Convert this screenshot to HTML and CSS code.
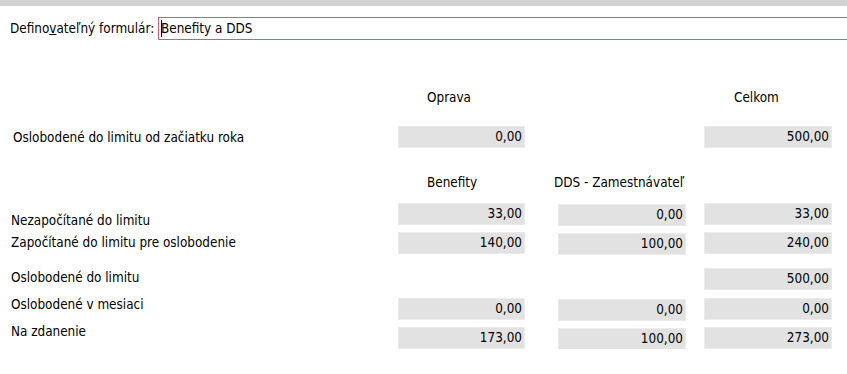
FILE: index.html
```html
<!DOCTYPE html>
<html lang="sk">
<head>
    <meta charset="UTF-8">
    <title>Definovateľný formulár</title>
    <link rel="stylesheet" href="styles.css">
</head>
<body>

    <div class="topbar"></div>

    <div class="form-row">
        <label class="form-label">Defino<u>v</u>ateľný formulár:</label>
        <div class="form-input"><span class="caret"></span>Benefity a DDS</div>
    </div>

    <!-- Oprava / Celkom -->
    <div class="row head head-a">
        <div class="label"></div>
        <div class="c1 title">Oprava</div>
        <div class="c2"></div>
        <div class="c3 title">Celkom</div>
    </div>

    <div class="row row-start">
        <div class="label label-wide">Oslobodené do limitu od začiatku roka</div>
        <div class="c1 field">0,00</div>
        <div class="c2"></div>
        <div class="c3 field">500,00</div>
    </div>

    <!-- Benefity / DDS -->
    <div class="row head head-b">
        <div class="label"></div>
        <div class="c1 title">Benefity</div>
        <div class="c2 title title-dds">DDS - Zamestnávateľ</div>
        <div class="c3"></div>
    </div>

    <div class="row row-b1">
        <div class="label">Nezapočítané do limitu</div>
        <div class="c1 field">33,00</div>
        <div class="c2 field">0,00</div>
        <div class="c3 field">33,00</div>
    </div>

    <div class="row row-b2">
        <div class="label">Započítané do limitu pre oslobodenie</div>
        <div class="c1 field">140,00</div>
        <div class="c2 field">100,00</div>
        <div class="c3 field">240,00</div>
    </div>

    <div class="row row-b3">
        <div class="label">Oslobodené do limitu</div>
        <div class="c1"></div>
        <div class="c2"></div>
        <div class="c3 field">500,00</div>
    </div>

    <div class="row row-b4">
        <div class="label">Oslobodené v mesiaci</div>
        <div class="c1 field">0,00</div>
        <div class="c2 field">0,00</div>
        <div class="c3 field">0,00</div>
    </div>

    <div class="row row-b5">
        <div class="label">Na zdanenie</div>
        <div class="c1 field">173,00</div>
        <div class="c2 field">100,00</div>
        <div class="c3 field">273,00</div>
    </div>

</body>
</html>
```

FILE: styles.css
```css
body {
    font-family: "DejaVu Sans Condensed", "DejaVu Sans", sans-serif;
    font-size: 13.4px;
    color: #000;
    background-color: #fff;
    margin: 0;
    overflow: hidden;
}

.topbar {
    height: 6px;
    background-color: #d2d2d2;
}

/* header with the form name */
.form-row {
    display: flex;
    align-items: center;
    height: 23px;
    margin-top: 11px;
}

.form-label {
    padding-left: 10px;
    width: 158px;
    box-sizing: border-box;
    white-space: nowrap;
}

.form-input {
    flex: 1;
    height: 23px;
    line-height: 21px;
    margin-right: -10px;
    padding-left: 2px;
    border: 1px solid #e0557a;
    box-sizing: border-box;
    white-space: nowrap;
}

.caret {
    display: inline-block;
    height: 17px;
    vertical-align: -4px;
    border-left: 1px solid #000;
    margin-right: -1px;
}

/* table rows */
.row {
    display: flex;
    align-items: flex-start;
    height: 22px;
}

.label {
    width: 398px;
    padding-left: 11px;
    box-sizing: border-box;
    line-height: 16px;
    white-space: nowrap;
    flex-shrink: 0;
}

.label-wide {
    padding-left: 13px;
}

.c1, .c2, .c3 {
    flex-shrink: 0;
    box-sizing: border-box;
    white-space: nowrap;
}

.c1 { width: 127px; }
.c2 { width: 128px; margin-left: 33px; }
.c3 { width: 128px; margin-left: 18px; }

.field {
    height: 22px;
    line-height: 22px;
    padding-right: 3px;
    text-align: right;
    background-color: #e2e2e2;
    box-shadow: inset 0 0 0 1px #ebebeb;
}

.c2.field {
    margin-top: 1px;
}

.head {
    height: 20px;
    line-height: 20px;
}

.title {
    padding-left: 29px;
}

.c3.title {
    padding-left: 30px;
}

.title-dds {
    padding-left: 0;
    text-indent: -4px;
}

.head-a { margin-top: 48px; }
.row-start { margin-top: 18px; }
.row-start .label { padding-top: 4px; }

.head-b { margin-top: 25px; }
.row-b1 { margin-top: 10px; }
.row-b1 .label { padding-top: 10px; }

.row-b2 { margin-top: 7px; }
.row-b2 .label { padding-top: 3px; }

.row-b3 { margin-top: 14px; }
.row-b3 .label { padding-top: 2px; }

.row-b4 { margin-top: 8px; }
.row-b4 .label { margin-top: -1px; }

.row-b5 { margin-top: 7px; }
.row-b5 .label { margin-top: -3px; }
```
